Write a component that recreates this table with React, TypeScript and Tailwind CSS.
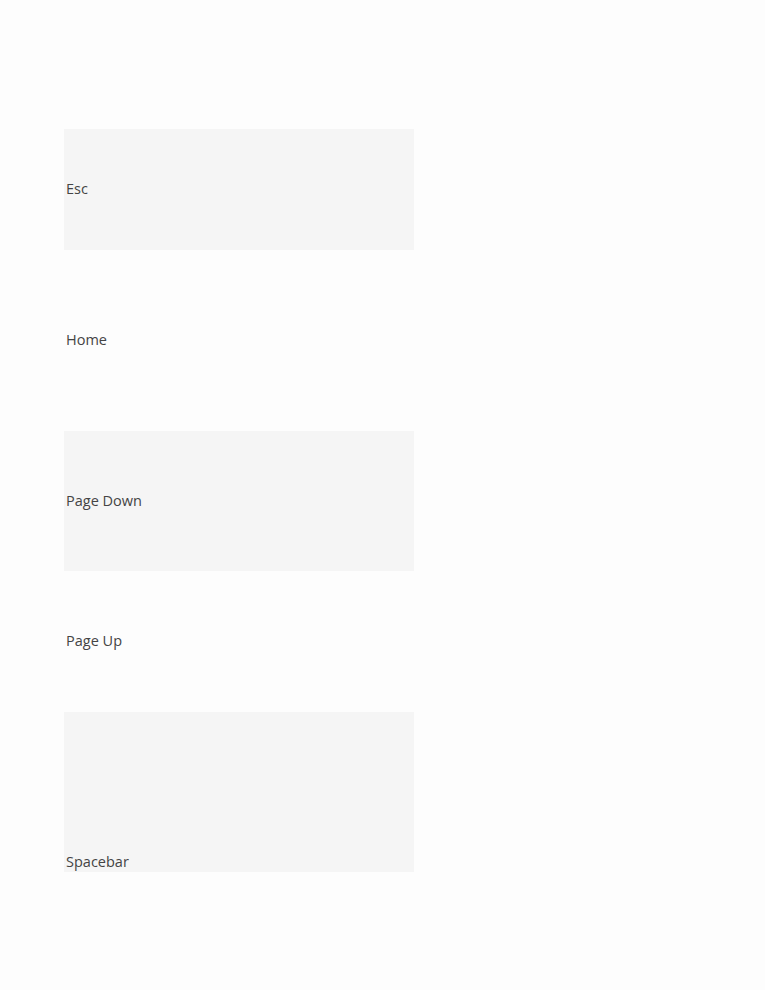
const rows = [
  { label: 'Esc', h: 'h-[121px]', gray: true, align: 'items-center' },
  { label: 'Home', h: 'h-[181px]', gray: false, align: 'items-center' },
  { label: 'Page Down', h: 'h-[140px]', gray: true, align: 'items-center' },
  { label: 'Page Up', h: 'h-[141px]', gray: false, align: 'items-center' },
  { label: 'Spacebar', h: 'h-[160px]', gray: true, align: 'items-end' },
];

export default function App() {
  return (
    <div className="min-h-[990px] bg-[#fdfdfd] pt-[129px] pl-16 font-['Open_Sans',sans-serif] text-[14.5px] text-[#444]">
      <div className="flex w-[350px] flex-col">
        {rows.map((r) => (
          <div
            key={r.label}
            className={`flex ${r.h} ${r.align} pl-[2px] ${r.gray ? 'bg-[#f5f5f5]' : ''}`}
          >
            <span className={r.align === 'items-end' ? 'leading-5' : 'mb-[1px] leading-5'}>{r.label}</span>
          </div>
        ))}
      </div>
    </div>
  );
}
